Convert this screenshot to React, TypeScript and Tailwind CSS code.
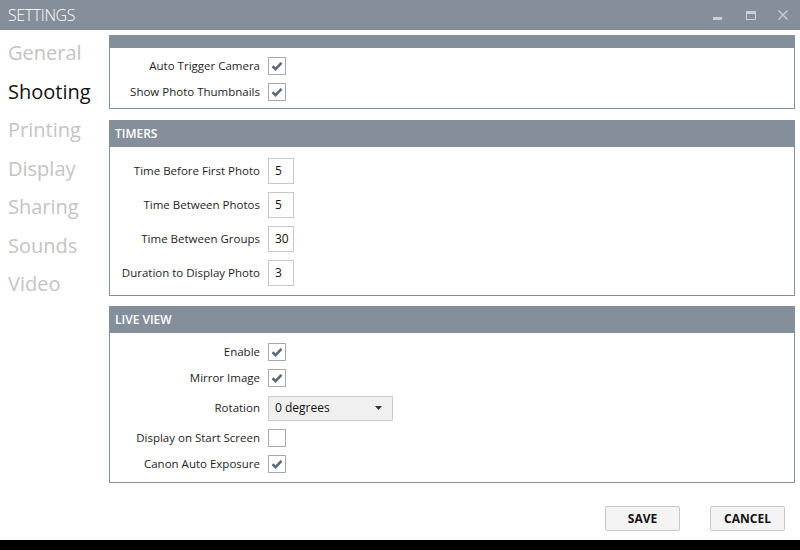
import type { ReactNode } from "react";

const font = { fontFamily: '"Open Sans", "Noto Sans", sans-serif' };

const navItems = ["General", "Shooting", "Printing", "Display", "Sharing", "Sounds", "Video"];

function Check({ checked }: { checked: boolean }) {
  return (
    <div className="flex h-[18px] w-[18px] items-center justify-center border border-[#a9a9a9] bg-white">
      {checked ? (
        <svg width="14" height="14" viewBox="0 0 14 14">
          <path d="M2.5 7.2 L5.6 10.2 L11.5 3.8" fill="none" stroke="#5c6976" strokeWidth="2.6" />
        </svg>
      ) : null}
    </div>
  );
}

function NumBox({ value }: { value: string }) {
  return (
    <div className="flex h-[26px] w-[26px] items-center border border-[#c8c8c8] bg-white pl-[6px] text-[12px] text-[#111]">
      {value}
    </div>
  );
}

function Row({ label, h, children }: { label: string; h: string; children: ReactNode }) {
  return (
    <div className={`flex items-center ${h}`}>
      <div className="w-[150px] text-right text-[11.5px] text-[#1e1e1e]">{label}</div>
      <div className="ml-[8px] flex items-center">{children}</div>
    </div>
  );
}

function Panel({ title, header, body, children }: { title?: string; header: string; body: string; children: ReactNode }) {
  return (
    <div className="border border-[#848f9b] bg-white">
      <div className={`flex items-center bg-[#848f9b] px-[5px] text-[12px] font-semibold text-white ${header}`}>{title}</div>
      <div className={body}>{children}</div>
    </div>
  );
}

export default function App() {
  return (
    <div className="flex h-[550px] w-[800px] flex-col overflow-hidden bg-white" style={font}>
      <div className="flex h-[30px] items-center justify-between bg-[#848f9b] pl-[8px]">
        <span className="text-[16px] font-light tracking-tight text-white">SETTINGS</span>
        <div className="flex h-full items-center">
          <div className="flex w-[34px] justify-center">
            <div className="mt-[6px] h-[3px] w-[9px] bg-[#c9ced4]" />
          </div>
          <div className="flex w-[34px] justify-center">
            <div className="h-[9px] w-[10px] border border-t-[3px] border-[#c9ced4]" />
          </div>
          <div className="flex w-[32px] justify-center pr-[2px]">
            <svg width="10" height="10" viewBox="0 0 10 10">
              <path d="M0.5 0.5 L9.5 9.5 M9.5 0.5 L0.5 9.5" stroke="#c9ced4" strokeWidth="1.4" />
            </svg>
          </div>
        </div>
      </div>

      <div className="flex flex-1">
        <div className="w-[109px] pl-[8px] pt-[4px]">
          {navItems.map((item) => (
            <div
              key={item}
              className={`text-[20px] leading-[38.5px] ${item === "Shooting" ? "text-[#111]" : "text-[#c4c4c4]"}`}
            >
              {item}
            </div>
          ))}
        </div>

        <div className="mr-[5px] flex flex-1 flex-col pt-[5px]">
          <Panel header="h-[12px]" body="pb-[4px] pt-[5px]">
            <Row label="Auto Trigger Camera" h="h-[26px]">
              <Check checked />
            </Row>
            <Row label="Show Photo Thumbnails" h="h-[25px]">
              <Check checked />
            </Row>
          </Panel>

          <div className="mt-[11px]">
            <Panel title="TIMERS" header="h-[26px]" body="pb-[5px] pt-[7px]">
              <Row label="Time Before First Photo" h="h-[34px]">
                <NumBox value="5" />
              </Row>
              <Row label="Time Between Photos" h="h-[34px]">
                <NumBox value="5" />
              </Row>
              <Row label="Time Between Groups" h="h-[34px]">
                <NumBox value="30" />
              </Row>
              <Row label="Duration to Display Photo" h="h-[34px]">
                <NumBox value="3" />
              </Row>
            </Panel>
          </div>

          <div className="mt-[10px]">
            <Panel title="LIVE VIEW" header="h-[26px]" body="pb-[5px] pt-[6px]">
              <Row label="Enable" h="h-[26px]">
                <Check checked />
              </Row>
              <Row label="Mirror Image" h="h-[26px]">
                <Check checked />
              </Row>
              <Row label="Rotation" h="h-[34px]">
                <div className="flex h-[25px] w-[125px] items-center justify-between border border-[#cccccc] bg-[#f0f0f0] pl-[6px] pr-[10px] text-[12px] text-[#111]">
                  <span>0 degrees</span>
                  <svg width="7" height="4" viewBox="0 0 7 4">
                    <path d="M0 0 H7 L3.5 4 Z" fill="#333" />
                  </svg>
                </div>
              </Row>
              <Row label="Display on Start Screen" h="h-[26px]">
                <Check checked={false} />
              </Row>
              <Row label="Canon Auto Exposure" h="h-[26px]">
                <Check checked />
              </Row>
            </Panel>
          </div>

          <div className="mt-[23px] flex justify-end gap-[30px] pr-[10px]">
            <button className="h-[25px] w-[75px] rounded-[2px] border border-[#c8c8c8] bg-[#f4f4f4] text-[12px] font-bold text-[#111]">
              SAVE
            </button>
            <button className="h-[25px] w-[75px] rounded-[2px] border border-[#c8c8c8] bg-[#f4f4f4] text-[12px] font-bold text-[#111]">
              CANCEL
            </button>
          </div>
        </div>
      </div>

      <div className="h-[10px] bg-black" />
    </div>
  );
}
